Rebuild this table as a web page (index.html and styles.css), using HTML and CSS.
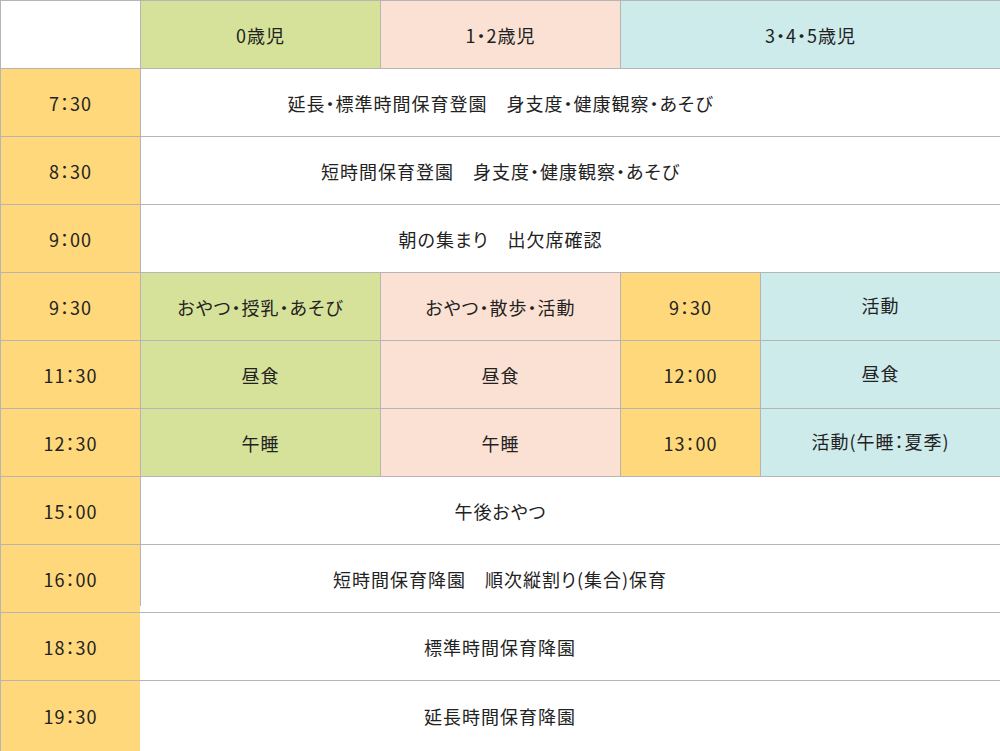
FILE: index.html
```html
<!DOCTYPE html>
<html lang="ja">
<head>
<meta charset="utf-8">
<title>デイリープログラム</title>
<link rel="stylesheet" href="styles.css">
</head>
<body>
<div class="schedule">
  <div class="cell blank"></div>
  <div class="cell age0">0歳児</div>
  <div class="cell age12">1・2歳児</div>
  <div class="cell age345 span2">3・4・5歳児</div>

  <div class="cell time">7：30</div>
  <div class="cell all">延長・標準時間保育登園　身支度・健康観察・あそび</div>

  <div class="cell time">8：30</div>
  <div class="cell all">短時間保育登園　身支度・健康観察・あそび</div>

  <div class="cell time">9：00</div>
  <div class="cell all">朝の集まり　出欠席確認</div>

  <div class="cell time">9：30</div>
  <div class="cell age0">おやつ・授乳・あそび</div>
  <div class="cell age12">おやつ・散歩・活動</div>
  <div class="cell time">9：30</div>
  <div class="cell age345 up">活動</div>

  <div class="cell time">11：30</div>
  <div class="cell age0">昼食</div>
  <div class="cell age12">昼食</div>
  <div class="cell time">12：00</div>
  <div class="cell age345 up">昼食</div>

  <div class="cell time">12：30</div>
  <div class="cell age0">午睡</div>
  <div class="cell age12">午睡</div>
  <div class="cell time">13：00</div>
  <div class="cell age345 up">活動(午睡：夏季)</div>

  <div class="cell time">15：00</div>
  <div class="cell all">午後おやつ</div>

  <div class="cell time">16：00</div>
  <div class="cell all partial">短時間保育降園　順次縦割り(集合)保育</div>

  <div class="cell time">18：30</div>
  <div class="cell all noleft">標準時間保育降園</div>

  <div class="cell time">19：30</div>
  <div class="cell all noleft">延長時間保育降園</div>
</div>
</body>
</html>
```

FILE: styles.css
```css
* {
  box-sizing: border-box;
}

html, body {
  margin: 0;
  padding: 0;
  background: #ffffff;
}

body {
  font-family: "Noto Sans CJK JP", "Noto Sans", sans-serif;
  font-size: 18px;
  color: #222222;
}

.schedule {
  display: grid;
  width: 1000px;
  grid-template-columns: 140px 240px 240px 140px 240px;
  grid-template-rows: repeat(10, 68px) 71px;
  border-right: 1px solid #b5b5b5;
  border-bottom: 1px solid #b5b5b5;
}

.cell {
  display: flex;
  align-items: center;
  justify-content: center;
  border-left: 1px solid #b5b5b5;
  border-top: 1px solid #b5b5b5;
  letter-spacing: 1px;
  font-feature-settings: "palt";
  white-space: nowrap;
  line-height: 1;
  padding-bottom: 0;
}

.blank { background: #ffffff; }
.age0 { background: #d6e29a; }
.age12 { background: #fbe1d3; }
.age345 { background: #ceebeb; }
.time { background: #fed87b; }
.all {
  background: #ffffff;
  grid-column: span 4;
  padding-right: 140px;
}
.span2 { grid-column: span 2; }
.up { padding-bottom: 4px; }

.noleft {
  border-left: none;
}

.partial {
  border-left: none;
  background: linear-gradient(#b5b5b5, #b5b5b5) left top / 1px 61px no-repeat, #ffffff;
}
```
